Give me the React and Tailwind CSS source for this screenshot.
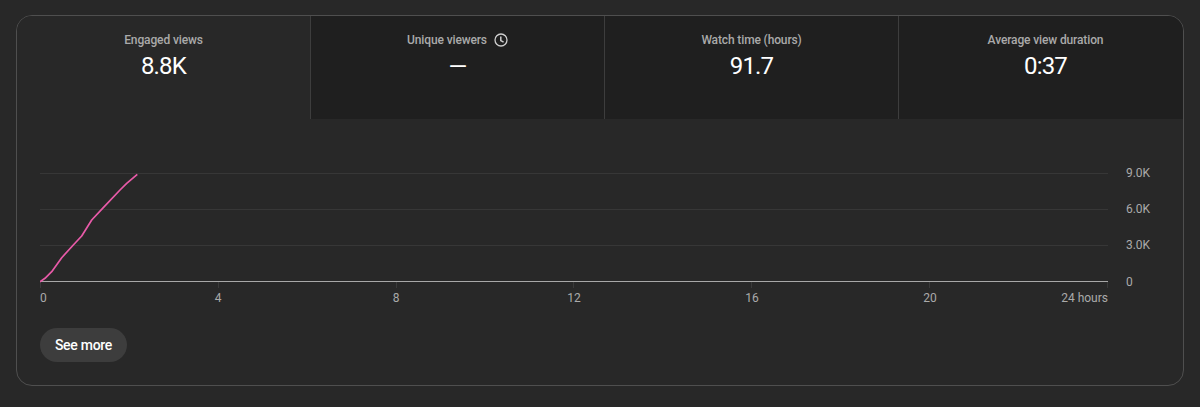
import React from "react";

const tabs = [
  { label: "Engaged views", value: "8.8K", active: true },
  { label: "Unique viewers", value: "—", clock: true },
  { label: "Watch time (hours)", value: "91.7" },
  { label: "Average view duration", value: "0:37" },
];

const rows = ["9.0K", "6.0K", "3.0K"];
const ticks = ["0", "4", "8", "12", "16", "20", "24 hours"];

function Clock() {
  return (
    <svg width="14" height="14" viewBox="0 0 14 14" fill="none" stroke="#cfcfcf" className="ml-[7px]">
      <circle cx="7" cy="7" r="6" strokeWidth="1.3" />
      <path d="M6.8 3.4V7.6L9.6 9.2" strokeWidth="1.5" />
    </svg>
  );
}

export default function App() {
  return (
    <div className="h-[407px] w-[1200px] overflow-hidden bg-[#282828] pl-4 pt-[15px] font-['Roboto',sans-serif]">
      <div className="h-[371px] w-[1168px] overflow-hidden rounded-[16px] border border-[#4f4f4f]">
        <div className="flex h-[103px]">
          {tabs.map((t) => (
            <div
              key={t.label}
              className={
                (t.active ? "bg-[#282828] " : "bg-[#1f1f1f] ") +
                "flex w-[294px] shrink-0 flex-col items-center border-r border-[#3d3d3d] pt-[16px]"
              }
            >
              <div className="flex h-[16px] items-center text-[12px] leading-[16px] font-medium tracking-[-0.13px] text-[#aaaaaa]">
                {t.label}
                {t.clock && <Clock />}
              </div>
              <div
                className={
                  (t.clock ? "mt-[3px] " : "mt-[2px] ") +
                  "text-[24px] leading-[32px] tracking-[-0.8px] text-white"
                }
              >
                {t.value}
              </div>
            </div>
          ))}
        </div>

        <div className="relative pl-[23px] pr-[16px] pt-[54px]">
          {rows.map((r) => (
            <div key={r} className="flex h-[36px] items-start">
              <div className="w-[1068px] border-t border-[#373737]" />
              <span className="ml-[18px] -mt-[8px] text-[12px] leading-[16px] tracking-[-0.05px] text-[#aaaaaa]">{r}</span>
            </div>
          ))}
          <div className="flex h-[20px] items-start">
            <div className="w-[1068px] border-t border-[#a8a8a8]">
              <div className="flex h-[6px] justify-between">
                {ticks.map((t) => (
                  <div key={t} className="w-px bg-[#3a3a3a]" />
                ))}
              </div>
            </div>
            <span className="ml-[18px] -mt-[7px] text-[12px] leading-[16px] text-[#aaaaaa]">0</span>
          </div>
          <div className="-mt-[11px] flex w-[1068px] justify-between text-[12px] leading-[16px] text-[#aaaaaa]">
            {ticks.map((t, i) => (
              <div
                key={t}
                className={
                  (i === 0 ? "justify-start " : i === 6 ? "justify-end " : "justify-center ") +
                  "flex w-0 whitespace-nowrap"
                }
              >
                <span>{t}</span>
              </div>
            ))}
          </div>
          <svg className="absolute left-[23px] top-[54px]" width="110" height="120" fill="none">
            <polyline
              points="0,108.7 5,105.3 11.7,98.7 21.7,84.7 33.3,72 41.7,63 51.7,47 63.3,34.7 80,17 86.7,10.3 97.3,1.3"
              stroke="#e85aa8"
              strokeWidth="1.7"
              strokeLinejoin="round"
            />
          </svg>
          <button className="mt-[22px] flex h-[34px] w-[87px] items-center justify-center rounded-full bg-[#3d3d3d] text-[14px] font-medium tracking-[-0.28px] text-white">
            See more
          </button>
        </div>
      </div>
    </div>
  );
}
